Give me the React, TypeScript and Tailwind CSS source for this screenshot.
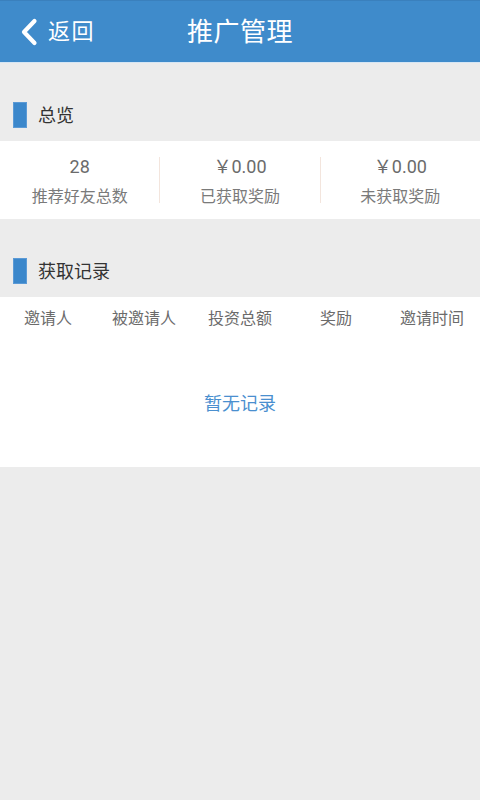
import React from "react";

const FONT = { fontFamily: 'Roboto, "Noto Sans CJK SC", sans-serif' };

function SectionHeader({ title }: { title: string }) {
  return (
    <div className="pt-[26px]">
      <div className="h-[52px] flex items-center">
        <div className="ml-[13px] w-[14px] h-[26px] bg-[#3b87cb] border border-[#5b9ad6]" />
        <div className="ml-[11px] mt-[2px] text-[18px] leading-none text-[#333333]">{title}</div>
      </div>
    </div>
  );
}

function Stat({ value, label }: { value: string; label: string }) {
  return (
    <div className="flex-1 flex flex-col items-center pt-[13px]">
      <div className="text-[18px] leading-[26px] text-[#6b6b6b]">{value}</div>
      <div className="mt-[4px] text-[16px] leading-[26px] text-[#7a7a7a]">{label}</div>
    </div>
  );
}

export default function App() {
  const cols = ["邀请人", "被邀请人", "投资总额", "奖励", "邀请时间"];
  return (
    <div className="w-[480px] min-h-[800px] bg-[#ececec] flex flex-col" style={FONT}>
      <div className="h-[63px] bg-[#3f8bcb] border-t border-[#3a80bd] border-b border-b-[#d6e6f4] flex items-center relative">
        <div className="flex items-center pl-[20px]">
          <svg width="18" height="28" viewBox="0 0 18 28" className="mt-[1px]">
            <path d="M14.5 3 L4 14 L14.5 25" fill="none" stroke="#ffffff" strokeWidth="4.2" strokeLinecap="round" strokeLinejoin="round" />
          </svg>
          <span className="ml-[10px] text-[22px] leading-none text-white tracking-[1.5px]">返回</span>
        </div>
        <div className="absolute left-0 right-0 top-0 bottom-0 flex items-center justify-center pointer-events-none">
          <span className="text-[26px] leading-none text-white tracking-[0.5px]">推广管理</span>
        </div>
      </div>

      <SectionHeader title="总览" />
      <div className="h-[78px] bg-white flex">
        <Stat value="28" label="推荐好友总数" />
        <div className="w-px h-[46px] self-center bg-[#f3e5dd]" />
        <Stat value="￥0.00" label="已获取奖励" />
        <div className="w-px h-[46px] self-center bg-[#f3e5dd]" />
        <Stat value="￥0.00" label="未获取奖励" />
      </div>

      <SectionHeader title="获取记录" />
      <div className="h-[170px] bg-white flex flex-col">
        <div className="h-[42px] pt-[2px] grid grid-cols-5 items-center">
          {cols.map((c) => (
            <div key={c} className="text-center text-[16px] leading-none text-[#6b6b6b]">
              {c}
            </div>
          ))}
        </div>
        <div className="flex-1 flex items-center justify-center pt-[2px]">
          <span className="text-[18px] leading-none text-[#4a8fcf]">暂无记录</span>
        </div>
      </div>
    </div>
  );
}
